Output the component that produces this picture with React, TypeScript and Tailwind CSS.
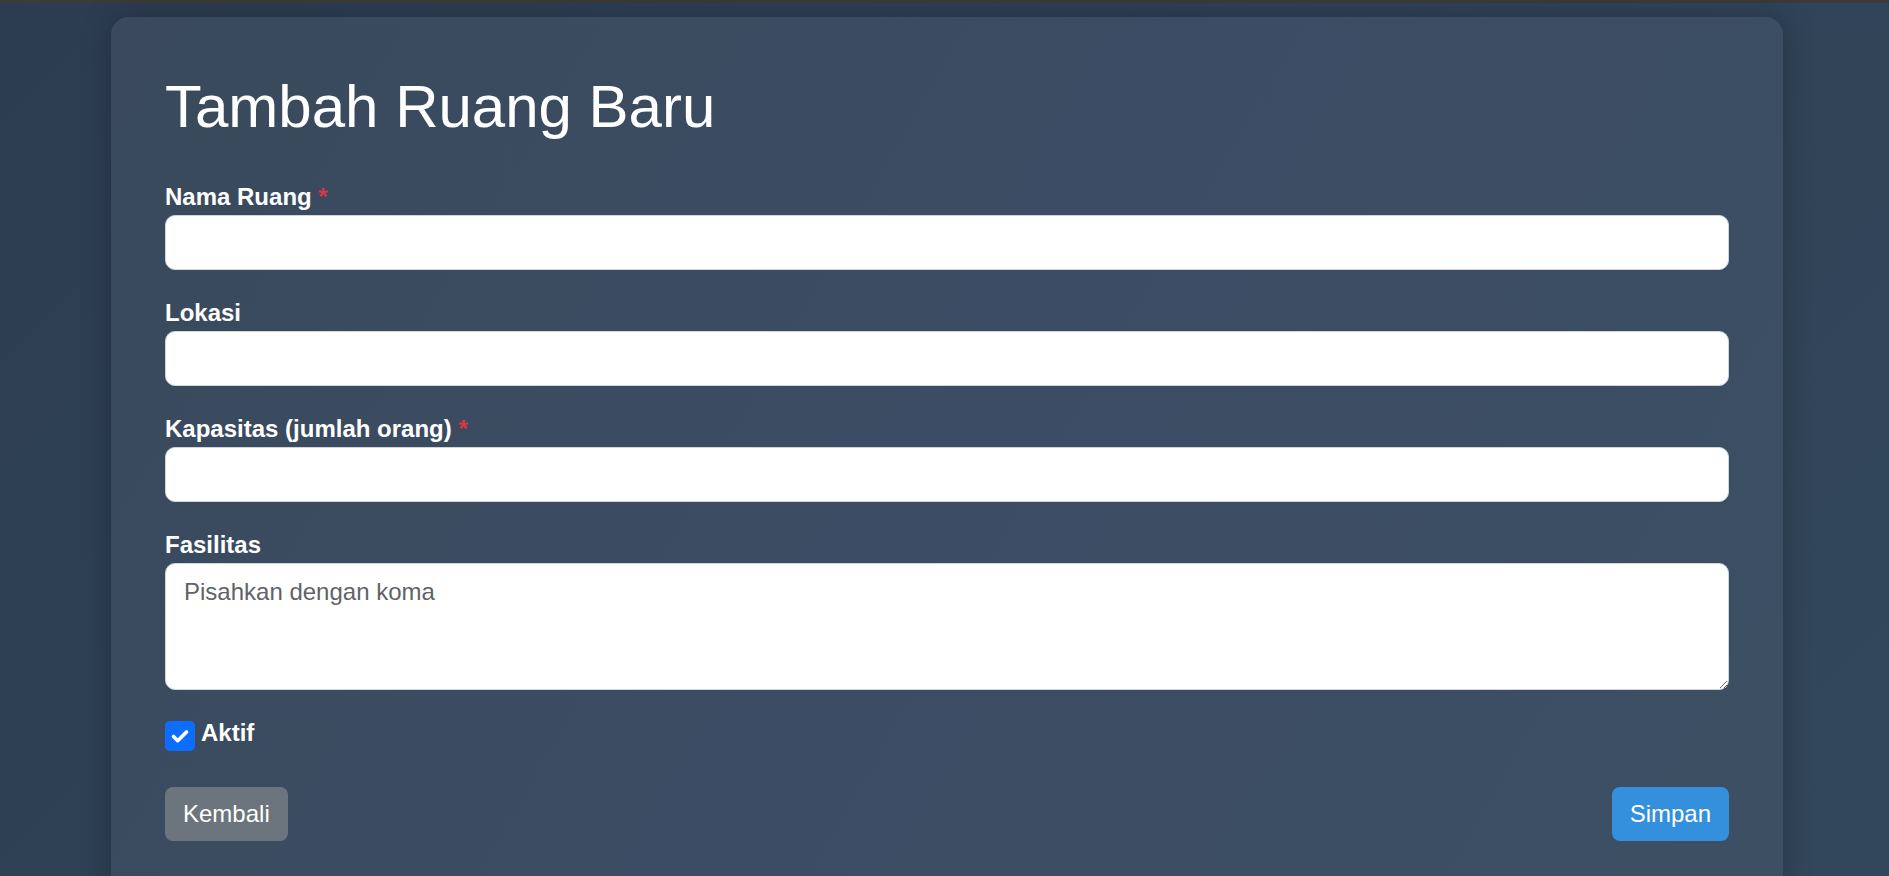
import { useState } from 'react';

function Field({
  label,
  required,
  children,
}: {
  label: string;
  required?: boolean;
  children: React.ReactNode;
}) {
  return (
    <div className="mb-[29px]">
      <label className="block mb-[4px] text-[24px] leading-[28px] font-bold text-white">
        {label}
        {required && <span className="text-[#dc3545]"> *</span>}
      </label>
      {children}
    </div>
  );
}

const inputClass =
  'block w-full h-[55px] px-[18px] bg-white border border-[#d0d5dc] rounded-[10px] text-[24px] text-[#212529] outline-none';

export default function App() {
  const [aktif, setAktif] = useState(true);

  return (
    <div
      className="min-h-screen bg-linear-135 from-[#2c3d50] to-[#33475c]"
      style={{ fontFamily: '"Liberation Sans", Arial, sans-serif' }}
    >
      <div className="h-[3px] bg-[#3b3b3b]" />
      <div className="pt-[14px]">
        <div className="w-[1672px] ml-[111px] rounded-[18px] bg-linear-120 from-[#3a4a5c] via-[#3b4c64] to-[#3d4f63] shadow-[0_0_30px_rgba(0,0,0,0.25)] p-[54px]">
          <h1 className="text-[60px] leading-[72px] font-normal text-white mb-10">
            Tambah Ruang Baru
          </h1>

          <form onSubmit={(e) => e.preventDefault()}>
            <Field label="Nama Ruang" required>
              <input type="text" className={inputClass} />
            </Field>
            <Field label="Lokasi">
              <input type="text" className={inputClass} />
            </Field>
            <Field label="Kapasitas (jumlah orang)" required>
              <input type="number" className={inputClass} />
            </Field>
            <div className="mb-[31px]">
              <label className="block mb-[4px] text-[24px] leading-[28px] font-bold text-white">
                Fasilitas
              </label>
              <textarea
                placeholder="Pisahkan dengan koma"
                className="block w-full h-[127px] pt-[10px] px-[18px] bg-white border border-[#d0d5dc] rounded-[10px] text-[24px] leading-[36px] text-[#212529] placeholder:text-[#5f6368] outline-none"
              />
            </div>

            <div className="flex items-start gap-[6px] mb-[36px]">
              <button
                type="button"
                onClick={() => setAktif(!aktif)}
                className={`w-[30px] h-[30px] rounded-[5px] flex items-center justify-center ${
                  aktif ? 'bg-[#0d6efd]' : 'bg-white border border-[#d0d5dc]'
                }`}
              >
                {aktif && (
                  <svg width="24" height="24" viewBox="0 0 24 24" fill="none">
                    <path
                      d="M5.5 12.5l4.2 4.2 8.8-8.8"
                      stroke="white"
                      strokeWidth="3.6"
                      strokeLinecap="round"
                      strokeLinejoin="round"
                    />
                  </svg>
                )}
              </button>
              <span className="-mt-[2px] text-[24px] leading-[28px] font-bold text-white">
                Aktif
              </span>
            </div>

            <div className="flex items-center justify-between">
              <button
                type="button"
                className="h-[54px] px-[18px] rounded-[8px] bg-[#6c757d] text-white text-[24px] leading-[36px]"
              >
                Kembali
              </button>
              <button
                type="submit"
                className="h-[54px] px-[18px] rounded-[8px] bg-[#3490dc] text-white text-[24px] leading-[36px]"
              >
                Simpan
              </button>
            </div>
          </form>
        </div>
      </div>
    </div>
  );
}
